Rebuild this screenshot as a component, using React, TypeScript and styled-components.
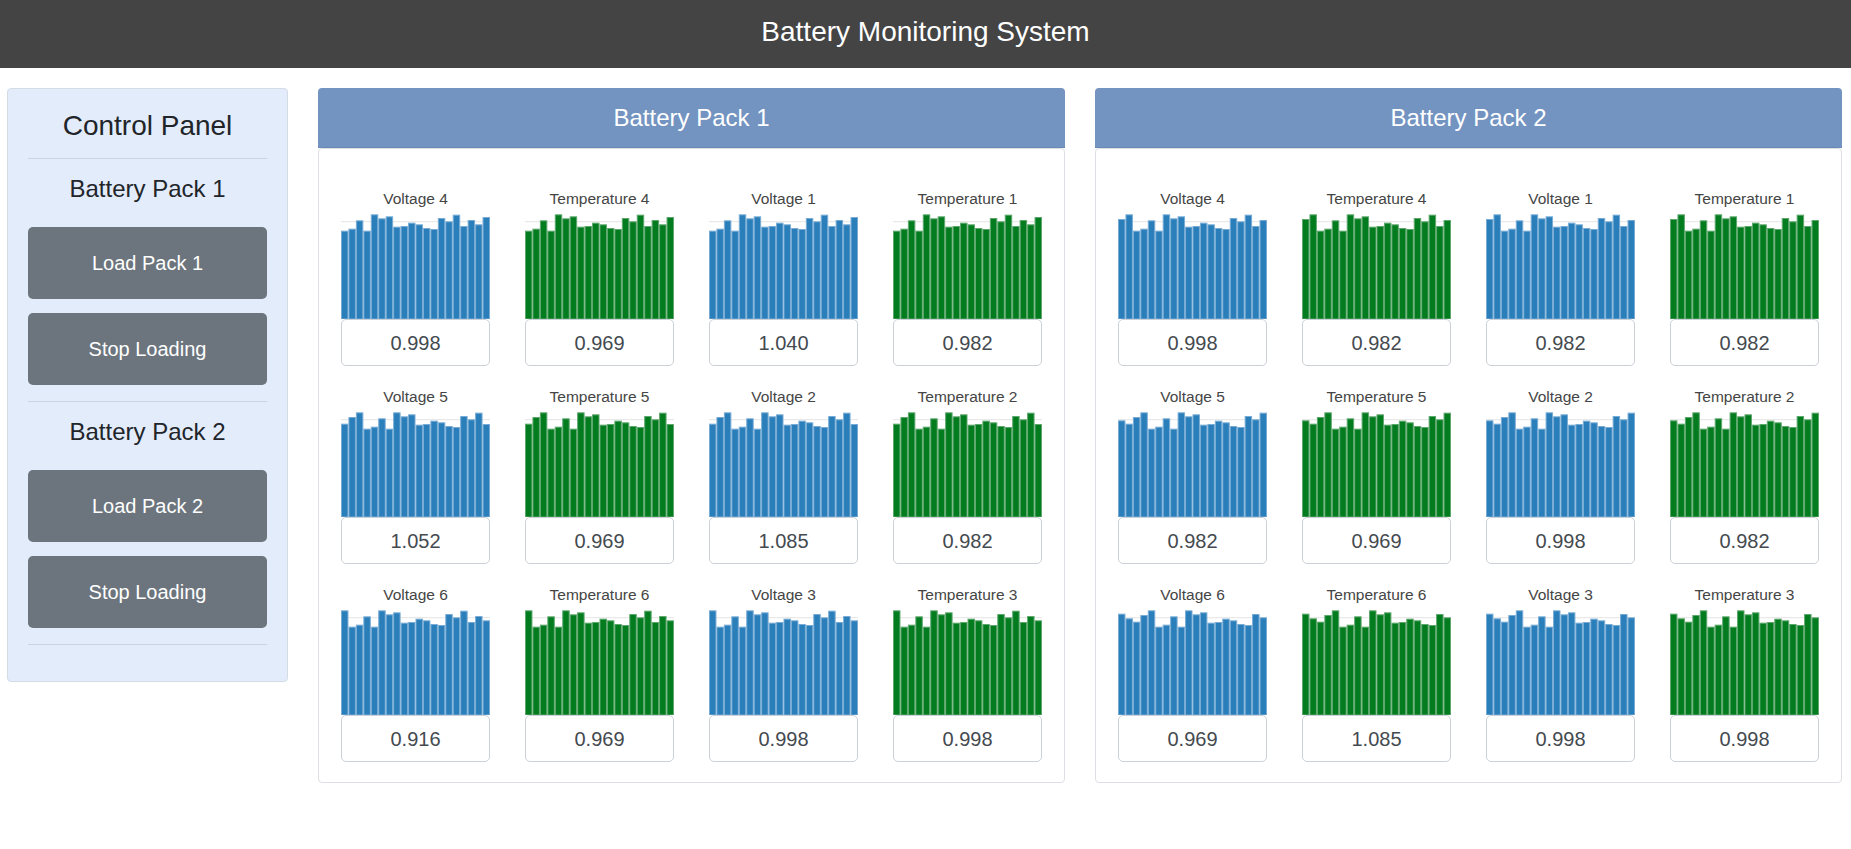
import React from "react";
import styled, { createGlobalStyle } from "styled-components";

const GlobalStyle = createGlobalStyle`
  html, body { margin: 0; padding: 0; background: #ffffff; }
  body { font-family: "Liberation Sans", Arial, Helvetica, sans-serif; color: #212529; }
  * { box-sizing: border-box; }
`;

const TopBar = styled.header`
  height: 68px;
  background: #444444;
  display: flex;
  align-items: center;
  justify-content: center;
  padding-bottom: 4px;
`;

const TopTitle = styled.h1`
  margin: 0;
  font-size: 28px;
  font-weight: 400;
  color: #ffffff;
  line-height: 32px;
`;

const Layout = styled.main`
  display: flex;
  align-items: flex-start;
  gap: 30px;
  padding: 20px 9px 0 7px;
`;

const Sidebar = styled.aside`
  width: 281px;
  flex: 0 0 281px;
  background: #e3ecfa;
  border: 1px solid #d5dce6;
  border-radius: 4px;
  padding: 20px;
  display: flex;
  flex-direction: column;
`;

const SideTitle = styled.h2`
  margin: 0;
  font-size: 28px;
  font-weight: 400;
  line-height: 33px;
  text-align: center;
  color: #212529;
`;

const Rule = styled.hr`
  margin: 16px 0;
  border: 0;
  border-top: 1px solid #ccd4df;
  height: 0;
`;

const PackHeading = styled.h3`
  margin: 0 0 24px;
  font-size: 24px;
  font-weight: 400;
  line-height: 28px;
  text-align: center;
  color: #212529;
`;

const ButtonStack = styled.div`
  display: flex;
  flex-direction: column;
  gap: 14px;
`;

const ActionButton = styled.button`
  height: 72px;
  width: 100%;
  border: 0;
  border-radius: 5px;
  background: #6c757d;
  color: #ffffff;
  font-family: "Liberation Sans", Arial, sans-serif;
  font-size: 20px;
  cursor: pointer;
`;

const PackCard = styled.section`
  flex: 1 1 0;
  min-width: 0;
  display: flex;
  flex-direction: column;
`;

const PackHeader = styled.div`
  height: 60px;
  background: #7393c1;
  border-bottom: 1px solid #6a89b6;
  border-radius: 4px 4px 0 0;
  display: flex;
  align-items: center;
  justify-content: center;
  color: #ffffff;
  font-size: 24px;
`;

const PackBody = styled.div`
  border: 1px solid #dcdfe3;
  border-radius: 4px;
  padding: 40px 22px 20px;
  display: grid;
  grid-template-columns: repeat(4, 1fr);
  column-gap: 35px;
  row-gap: 21px;
`;

const Cell = styled.div`
  display: flex;
  flex-direction: column;
`;

const CellTitle = styled.div`
  height: 18px;
  line-height: 18px;
  padding-top: 1px;
  font-size: 15.5px;
  text-align: center;
  color: #454545;
`;

const ChartSvg = styled.svg`
  display: block;
  width: 100%;
  height: 112px;
`;

const ValueBox = styled.div`
  height: 47px;
  border: 1px solid #ccd1d8;
  border-radius: 5px;
  padding-top: 2px;
  display: flex;
  align-items: center;
  justify-content: center;
  font-size: 20px;
  color: #444a50;
`;

const SERIES = [38, 52, 62, 42, 28, 77, 71, 46, 77, 28, 40, 34, 65, 63, 53, 58, 69, 72, 39, 49, 29, 63, 45, 58, 36];
const heights = SERIES.map((t) => 114 - t / 3);

type Kind = "voltage" | "temp";

const PALETTE: Record<Kind, { fill: string; edge: string }> = {
  voltage: { fill: "#2a7eb9", edge: "#78acd6" },
  temp: { fill: "#037b1f", edge: "#5ea86d" },
};

function BarChart({ offset, kind }: { offset: number; kind: Kind }) {
  const W = 149;
  const H = 112;
  const n = 20;
  const bw = W / n;
  const data = heights.slice(offset, offset + n);
  const c = PALETTE[kind];
  return (
    <ChartSvg viewBox={`0 0 ${W} ${H}`} preserveAspectRatio="none">
      <line x1={0} x2={W} y1={H - 97.3} y2={H - 97.3} stroke="#e4e4e4" strokeWidth={1} />
      {data.map((h, i) => (
        <rect
          key={i}
          x={i * bw + 0.5}
          y={H - h + 0.5}
          width={bw - 1}
          height={h - 0.5}
          fill={c.fill}
          stroke={c.edge}
          strokeWidth={1}
        />
      ))}
    </ChartSvg>
  );
}

const ROW_LABELS = [
  ["Voltage 4", "Temperature 4", "Voltage 1", "Temperature 1"],
  ["Voltage 5", "Temperature 5", "Voltage 2", "Temperature 2"],
  ["Voltage 6", "Temperature 6", "Voltage 3", "Temperature 3"],
];

const PACKS = [
  {
    name: "Battery Pack 1",
    offsets: [5, 2, 4],
    values: [
      ["0.998", "0.969", "1.040", "0.982"],
      ["1.052", "0.969", "1.085", "0.982"],
      ["0.916", "0.969", "0.998", "0.998"],
    ],
  },
  {
    name: "Battery Pack 2",
    offsets: [3, 1, 0],
    values: [
      ["0.998", "0.982", "0.982", "0.982"],
      ["0.982", "0.969", "0.998", "0.982"],
      ["0.969", "1.085", "0.998", "0.998"],
    ],
  },
];

export default function App() {
  return (
    <>
      <GlobalStyle />
      <TopBar>
        <TopTitle>Battery Monitoring System</TopTitle>
      </TopBar>
      <Layout>
        <Sidebar>
          <SideTitle>Control Panel</SideTitle>
          <Rule />
          <PackHeading>Battery Pack 1</PackHeading>
          <ButtonStack>
            <ActionButton>Load Pack 1</ActionButton>
            <ActionButton>Stop Loading</ActionButton>
          </ButtonStack>
          <Rule />
          <PackHeading>Battery Pack 2</PackHeading>
          <ButtonStack>
            <ActionButton>Load Pack 2</ActionButton>
            <ActionButton>Stop Loading</ActionButton>
          </ButtonStack>
          <Rule />
        </Sidebar>
        {PACKS.map((pack) => (
          <PackCard key={pack.name}>
            <PackHeader>{pack.name}</PackHeader>
            <PackBody>
              {ROW_LABELS.map((row, r) =>
                row.map((label, c) => (
                  <Cell key={`${r}-${c}`}>
                    <CellTitle>{label}</CellTitle>
                    <BarChart offset={pack.offsets[r]} kind={label.startsWith("Voltage") ? "voltage" : "temp"} />
                    <ValueBox>{pack.values[r][c]}</ValueBox>
                  </Cell>
                ))
              )}
            </PackBody>
          </PackCard>
        ))}
      </Layout>
    </>
  );
}
